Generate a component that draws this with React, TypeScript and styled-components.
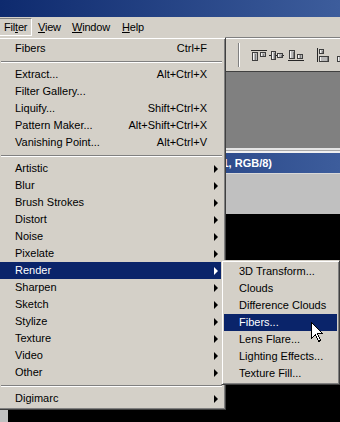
import React from 'react'
import styled, { createGlobalStyle } from 'styled-components'

const GlobalStyle = createGlobalStyle`
  html, body {
    margin: 0;
    padding: 0;
    background: #000;
  }
`

const Screen = styled.div`
  position: relative;
  width: 340px;
  height: 422px;
  overflow: hidden;
  display: flex;
  flex-direction: column;
  background: #000;
  font-family: 'Liberation Sans', Arial, sans-serif;
  font-size: 11px;
  color: #000;
`

const AppTitleBar = styled.div`
  flex: none;
  height: 17px;
  background: linear-gradient(to right, #0e2a6e, #3d5d9c);
`

const MenuBar = styled.div`
  flex: none;
  height: 20px;
  display: flex;
  align-items: center;
  background: #d4d0c8;
`

const MenuBarItem = styled.div<{ $open?: boolean; $width: number }>`
  width: ${({ $width }) => $width}px;
  height: 18px;
  line-height: 16px;
  padding-left: 5px;
  box-sizing: border-box;
  border: 1px solid transparent;
  white-space: nowrap;
  letter-spacing: -0.2px;
  ${({ $open }) => $open && 'border-color: #808080 #fff #fff #808080;'}

  &:first-child {
    margin-left: -2px;
  }
`

const Workspace = styled.div`
  flex: 1;
  display: flex;
  flex-direction: column;
`

const OptionsBar = styled.div`
  flex: none;
  height: 35px;
  box-sizing: border-box;
  display: flex;
  align-items: center;
  padding-left: 238px;
  background: #d4d0c8;
  border-top: 1px solid #808080;
  border-bottom: 1px solid #404040;
  box-shadow: inset 0 1px #fff;
`

const BarDivider = styled.div`
  width: 0;
  height: 24px;
  border-left: 1px solid #808080;
  border-right: 1px solid #fff;
  margin-right: 10px;
`

const GrayArea = styled.div`
  flex: none;
  height: 76px;
  background: #808080;
`

const DocWindow = styled.div`
  flex: 1;
  display: flex;
  flex-direction: column;
`

const WindowEdge = styled.div`
  flex: none;
  height: 5px;
  background: linear-gradient(#e4e4e4 0 2px, #a8a8a8 2px 3px, #f0f0f0 3px 5px);
`

const DocTitle = styled.div`
  flex: none;
  height: 20px;
  display: flex;
  align-items: center;
  background: linear-gradient(to right, #0e2a6e, #3d5d9c);
  border-bottom: 1px solid #d8d8d8;
`

const DocTitleText = styled.div`
  width: 272px;
  text-align: right;
  white-space: nowrap;
  overflow: hidden;
  color: #fff;
  font-weight: bold;
`

const DocBody = styled.div`
  flex: 1;
  display: flex;
  padding: 40px 0 0 8px;
  background: #c0c0c0;
`

const Canvas = styled.div`
  flex: 1;
  background: #000;
`

const Popup = styled.div<{ $top: number; $left: number; $width: number }>`
  position: absolute;
  top: ${({ $top }) => $top}px;
  left: ${({ $left }) => $left}px;
  width: ${({ $width }) => $width}px;
  box-sizing: border-box;
  padding: 2px;
  background: #d4d0c8;
  border: 1px solid;
  border-color: #d4d0c8 #404040 #404040 #d4d0c8;
  box-shadow: inset 1px 1px #fff, inset -1px -1px #808080;
`

const Item = styled.div<{ $active?: boolean }>`
  display: flex;
  align-items: center;
  height: 17px;
  line-height: 17px;
  padding-left: 15px;
  white-space: nowrap;
  background: ${({ $active }) => ($active ? '#0a246a' : 'transparent')};
  color: ${({ $active }) => ($active ? '#fff' : '#000')};
`

const Label = styled.span`
  flex: 1;
`

const Shortcut = styled.span``

const ArrowSlot = styled.span`
  flex: none;
  width: 16px;
  box-sizing: border-box;
  padding-left: 7px;
  display: flex;
  align-items: center;
`

const Arrow = styled.span`
  width: 0;
  height: 0;
  border-left: 4px solid currentColor;
  border-top: 4px solid transparent;
  border-bottom: 4px solid transparent;
`

const Separator = styled.div`
  height: 9px;
  box-sizing: border-box;
  padding-top: 4px;
  margin: 0 1px;

  &::after {
    content: '';
    display: block;
    border-top: 1px solid #808080;
    border-bottom: 1px solid #fff;
  }
`

const Pointer = styled.svg`
  position: absolute;
  left: 311px;
  top: 322px;
`

type Entry = { label?: string; keys?: string; sub?: boolean; active?: boolean; sep?: boolean }

const filterMenu: Entry[] = [
  { label: 'Fibers', keys: 'Ctrl+F' },
  { sep: true },
  { label: 'Extract...', keys: 'Alt+Ctrl+X' },
  { label: 'Filter Gallery...' },
  { label: 'Liquify...', keys: 'Shift+Ctrl+X' },
  { label: 'Pattern Maker...', keys: 'Alt+Shift+Ctrl+X' },
  { label: 'Vanishing Point...', keys: 'Alt+Ctrl+V' },
  { sep: true },
  { label: 'Artistic', sub: true },
  { label: 'Blur', sub: true },
  { label: 'Brush Strokes', sub: true },
  { label: 'Distort', sub: true },
  { label: 'Noise', sub: true },
  { label: 'Pixelate', sub: true },
  { label: 'Render', sub: true, active: true },
  { label: 'Sharpen', sub: true },
  { label: 'Sketch', sub: true },
  { label: 'Stylize', sub: true },
  { label: 'Texture', sub: true },
  { label: 'Video', sub: true },
  { label: 'Other', sub: true },
  { sep: true },
  { label: 'Digimarc', sub: true },
]

const renderMenu = [
  '3D Transform...',
  'Clouds',
  'Difference Clouds',
  'Fibers...',
  'Lens Flare...',
  'Lighting Effects...',
  'Texture Fill...',
]

// small 3d block used by the align buttons
const Block = ({ x, y, w, h }: { x: number; y: number; w: number; h: number }) => (
  <g>
    <rect x={x + 0.5} y={y + 0.5} width={w - 1} height={h - 1} fill="#b8b8b8" stroke="#3a3a3a" />
    <line x1={x + 1.5} y1={y + 1} x2={x + 1.5} y2={y + h - 1} stroke="#f4f4f4" />
    <line x1={x + w - 2} y1={y + 1.5} x2={x + w - 2} y2={y + h - 1} stroke="#7a7a7a" />
  </g>
)

const AlignIcons = () => (
  <svg width="92" height="16" viewBox="0 0 92 16" shapeRendering="crispEdges">
    {/* align top */}
    <line x1="1" y1="3.5" x2="17" y2="3.5" stroke="#222" />
    <Block x={2} y={5} w={6} h={9} />
    <Block x={10} y={5} w={6} h={5} />
    {/* align vertical centers */}
    <line x1="19" y1="8.5" x2="35" y2="8.5" stroke="#222" />
    <Block x={21} y={4} w={6} h={9} />
    <Block x={28} y={6} w={6} h={5} />
    {/* align bottom */}
    <Block x={40} y={3} w={6} h={9} />
    <Block x={48} y={7} w={6} h={5} />
    <line x1="39" y1="13.5" x2="55" y2="13.5" stroke="#222" />
    {/* align left */}
    <line x1="69.5" y1="1" x2="69.5" y2="15" stroke="#222" />
    <Block x={71} y={2} w={5} h={5} />
    <Block x={71} y={9} w={10} h={6} />
    {/* next button, cut off */}
    <Block x={89} y={9} w={6} h={6} />
  </svg>
)

const App = () => {
  return (
    <Screen>
      <GlobalStyle />
      <AppTitleBar />
      <MenuBar>
        <MenuBarItem $open $width={34}>
          Fil<u>t</u>er
        </MenuBarItem>
        <MenuBarItem $width={34}>
          <u>V</u>iew
        </MenuBarItem>
        <MenuBarItem $width={50}>
          <u>W</u>indow
        </MenuBarItem>
        <MenuBarItem $width={34}>
          <u>H</u>elp
        </MenuBarItem>
      </MenuBar>
      <Workspace>
        <OptionsBar>
          <BarDivider />
          <AlignIcons />
        </OptionsBar>
        <GrayArea />
        <DocWindow>
          <WindowEdge />
          <DocTitle>
            <DocTitleText>Untitled-1 @ 100% (Layer 1, RGB/8)</DocTitleText>
          </DocTitle>
          <DocBody>
            <Canvas />
          </DocBody>
        </DocWindow>
      </Workspace>

      <Popup $top={37} $left={-3} $width={229}>
        {filterMenu.map((entry, i) =>
          entry.sep ? (
            <Separator key={i} />
          ) : (
            <Item key={i} $active={entry.active}>
              <Label>{entry.label}</Label>
              {entry.keys && <Shortcut>{entry.keys}</Shortcut>}
              <ArrowSlot>{entry.sub && <Arrow />}</ArrowSlot>
            </Item>
          )
        )}
      </Popup>

      <Popup $top={260} $left={221} $width={119}>
        {renderMenu.map((label) => (
          <Item key={label} $active={label === 'Fibers...'}>
            <Label>{label}</Label>
          </Item>
        ))}
      </Popup>

      <Pointer width="13" height="21" viewBox="0 0 13 21" shapeRendering="crispEdges">
        <path
          d="M0.5 0.5 L0.5 16.5 L4.5 12.5 L7.5 19.5 L9.5 18.5 L6.5 11.5 L11.5 11.5 Z"
          fill="#fff"
          stroke="#000"
        />
      </Pointer>
    </Screen>
  )
}

export default App
